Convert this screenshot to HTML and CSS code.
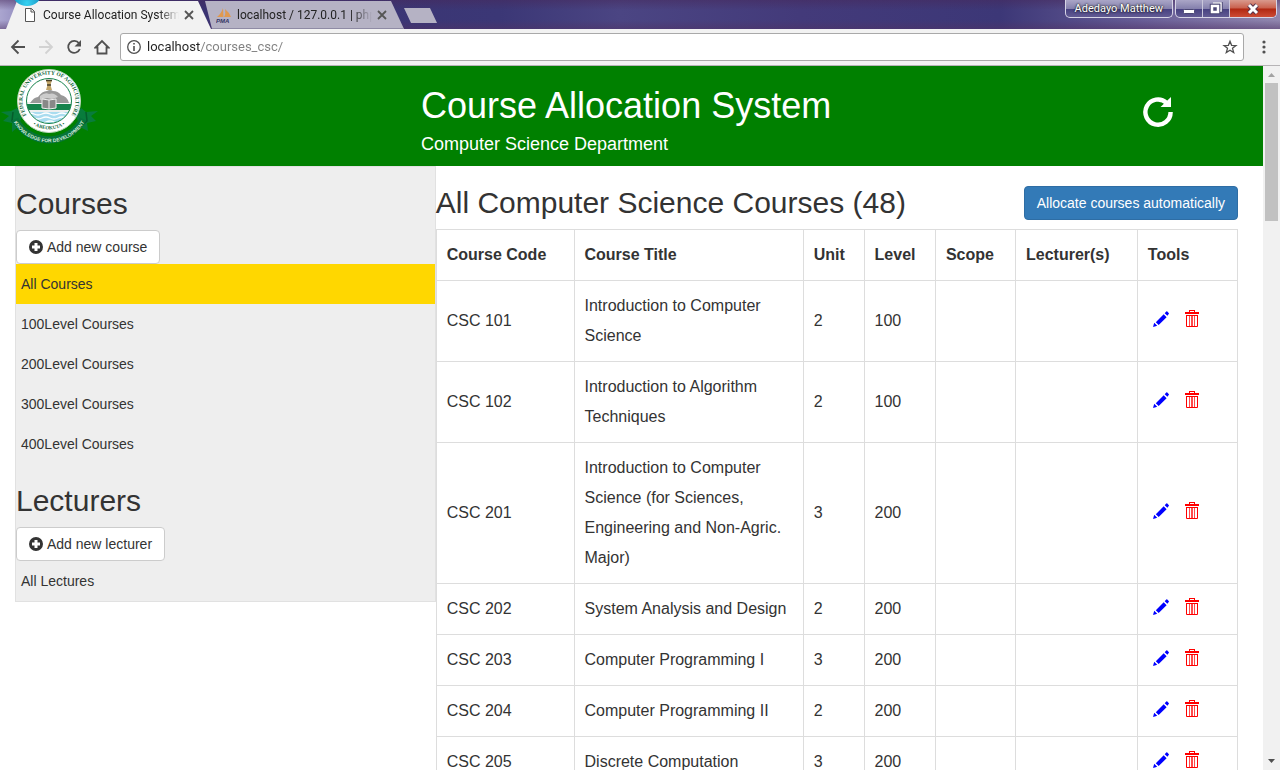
FILE: index.html
```html
<!DOCTYPE html>
<html lang="en">
<head>
<meta charset="utf-8">
<title>Course Allocation System</title>
<link rel="stylesheet" href="styles.css">
</head>
<body>
<svg class="defs" aria-hidden="true">
  <symbol id="pencil" viewBox="0 0 16 16">
    <path d="M0 16l1.200-4.200 3 3zM2.800 11.200l7.900-7.900 2.900 2.900-7.900 7.900zM11.700 2.200L13.300.6q.5-.5 1 0l1.400 1.400q.5.500 0 1l-1.300 1.800z"/>
  </symbol>
  <symbol id="trash" viewBox="0 0 16 18">
    <path d="M5 2V0h6v2h4v2H1V2zm1 0h4V1H6z" fill-rule="evenodd"/>
    <path d="M2 5h12v11a1 1 0 0 1-1 1H3a1 1 0 0 1-1-1zm1 1v10h10V6z" fill-rule="evenodd"/>
    <path d="M5 6h1v10H5zM7 6h2v10H7zM10 6h1v10h-1z" opacity=".7"/>
  </symbol>
  <symbol id="plus" viewBox="0 0 14 14">
    <path d="M7 0a7 7 0 1 0 0 14A7 7 0 0 0 7 0zM5.500 3h3v2.500H11v3H8.500V11h-3V8.500H3v-3h2.500z" fill-rule="evenodd"/>
  </symbol>
  <symbol id="cross" viewBox="0 0 10 10">
    <path d="M1 1l8 8M9 1L1 9" fill="none" stroke="#555" stroke-width="1.800"/>
  </symbol>
</svg>

<div class="tabstrip">
  <span class="orb"></span>
  <div class="tab active">
    <svg class="favicon" viewBox="0 0 16 16"><path d="M3.500 1.500h6l3 3v10h-9zM9 1.500v3.500h3.500" fill="#fff" stroke="#555"/></svg>
    <span class="tab-title">Course Allocation System</span>
    <button class="tab-close" aria-label="Close tab"><svg width="10" height="10"><use href="#cross"/></svg></button>
  </div>
  <div class="tab back">
    <svg class="favicon" viewBox="0 0 16 16"><path d="M1 10Q5 7 7 1l.5 9zM8 10Q10 7 9 2q4 3 6 8z" fill="#e0994f"/><text x="0" y="15.500" class="pma">PMA</text></svg>
    <span class="tab-title">localhost / 127.0.0.1 | php</span>
    <button class="tab-close" aria-label="Close tab"><svg width="10" height="10"><use href="#cross"/></svg></button>
  </div>
  <button class="new-tab" aria-label="New tab"></button>
  <div class="window-controls">
    <button class="profile">Adedayo Matthew</button>
    <div class="control-group">
      <button aria-label="Minimize"><svg width="14" height="14" viewBox="0 0 14 14"><rect x="1.500" y="7.500" width="11" height="4" rx="1" fill="#fff" stroke="#4b4875"/></svg></button>
      <button aria-label="Restore"><svg width="14" height="14" viewBox="0 0 14 14"><path d="M4 1h8v8h-2" fill="none" stroke="#4b4875" stroke-width="3.500"/><path d="M4 1h8v8h-2" fill="none" stroke="#fff" stroke-width="1.500"/><rect x="3" y="4" width="6" height="6" fill="none" stroke="#4b4875" stroke-width="4.500"/><rect x="3" y="4" width="6" height="6" fill="#4b4875" stroke="#fff" stroke-width="2.500"/></svg></button>
      <button class="close-window" aria-label="Close"><svg width="14" height="14" viewBox="0 0 14 14"><path d="M3 3l8 8M11 3l-8 8" stroke="#57344c" stroke-width="5"/><path d="M3 3l8 8M11 3l-8 8" stroke="#fff" stroke-width="3"/></svg></button>
    </div>
  </div>
</div>

<div class="toolbar">
  <button aria-label="Back"><svg viewBox="0 0 16 16"><path d="M15 8H2M8.500 1.500L2 8l6.500 6.500" fill="none" stroke="#505050" stroke-width="1.800"/></svg></button>
  <button aria-label="Forward"><svg viewBox="0 0 16 16"><path d="M1 8h13M7.500 1.500L14 8l-6.500 6.500" fill="none" stroke="#d2d2d2" stroke-width="1.800"/></svg></button>
  <button aria-label="Reload"><svg viewBox="0 0 16 16"><path d="M13 4.200A6 6 0 1 0 13.800 10" fill="none" stroke="#505050" stroke-width="1.800"/><path d="M15 1v6.500H8.500z" fill="#505050"/></svg></button>
  <button aria-label="Home"><svg viewBox="0 0 16 16"><path d="M1.500 8.500L8 2l6.500 6.500H12.500V14.500h-9V8.500z" fill="none" stroke="#505050" stroke-width="1.800"/></svg></button>
  <div class="omnibox">
    <svg viewBox="0 0 16 16"><circle cx="8" cy="8" r="6.300" fill="none" stroke="#505050" stroke-width="1.300"/><path d="M7.200 4h1.600v1.600H7.200zM7.200 7h1.600v5H7.200z" fill="#505050"/></svg>
    <input class="address" type="text" value="localhost/courses_csc/" aria-label="Address">
    <button aria-label="Bookmark"><svg viewBox="0 0 16 16"><path d="M8 2.200l1.600 4.100 4.400.2-3.500 2.800 1.200 4.300L8 11.200l-3.700 2.400 1.200-4.300L2 6.500l4.400-.2z" fill="none" stroke="#505050" stroke-width="1.300"/></svg></button>
  </div>
  <button class="menu" aria-label="Menu"><svg viewBox="0 0 16 16"><circle cx="8" cy="3" r="1.600" fill="#505050"/><circle cx="8" cy="8" r="1.600" fill="#505050"/><circle cx="8" cy="13" r="1.600" fill="#505050"/></svg></button>
</div>

<div class="viewport">
  <div class="page">
    <header class="banner">
      <svg class="crest" viewBox="0 0 100 80" role="img" aria-label="Federal University of Agriculture Abeokuta">
        <defs>
          <path id="ring-top" d="M31 54.400A26.500 26.500 0 1 1 67 54.400"/>
          <path id="ring-bottom" d="M22 45A29 29 0 0 0 76 45"/>
          <path id="ribbon" d="M10 48A41 41 0 0 0 88 48"/>
          <clipPath id="inner"><circle cx="49" cy="35" r="22.500"/></clipPath>
        </defs>
        <path d="M1 46l10-1 6-3 6 5-5 14-6 5 0-9-9-2 6-5zM98 45l-12 1-5-4-6 5 5 14 8 4-1-8 9-2-5-5z" fill="#087c3c"/>
        <path d="M13 46l-1 9 7 6M86 46l1 9-7 6" fill="none" stroke="#055c2b" stroke-width="1.500"/>
        <path d="M15 53A38 38 0 0 0 83 53" fill="none" stroke="#07733b" stroke-width="7"/>
        <circle cx="49" cy="35" r="31.500" fill="#fff" stroke="#bfd9bf"/>
        <g clip-path="url(#inner)">
          <path d="M20 46h60v14H20z" fill="#a9dcef"/>
          <path d="M26 48q4-2 8 0t8 0 8 0 8 0 8 0 8 0M26 52q4-2 8 0t8 0 8 0 8 0 8 0 8 0M30 56q4-2 8 0t8 0 8 0 8 0 8 0" fill="none" stroke="#fff" stroke-width="1.300"/>
          <path d="M24 38h50v6H24z" fill="#16834c"/><path d="M24 36h50v1.500H24zM24 44h50v2H24z" fill="#eee"/>
          <path d="M30 37q4-6 8-6 4-6 9-6 3-2 6 0 5 0 8 4 6 1 8 8z" fill="#999"/>
          <path d="M40 30q5-4 9-2 5-2 9 3l-6 2-5-1-7 2z" fill="#ccc"/>
        </g>
        <circle cx="49" cy="35" r="22.500" fill="none" stroke="#16834c" stroke-width="1"/>
        <path d="M42 33l7 1 7-1v9l-7 1-7-1z" fill="#888" stroke="#eee"/><path d="M49 34v9" stroke="#eee"/>
        <path d="M46 14h6l-1.500 5 1.500 5h-6l1.500-5z" fill="#c2a66a"/><path d="M46 14.500h6M47 19h4" stroke="#463c25" stroke-width="1.500"/>
        <text class="crest-name"><textPath href="#ring-top" startOffset="50%">FEDERAL UNIVERSITY OF AGRICULTURE</textPath></text>
        <text class="crest-place"><textPath href="#ring-bottom" startOffset="50%">• ABEOKUTA •</textPath></text>
        <text class="crest-motto"><textPath href="#ribbon" startOffset="50%">KNOWLEDGE FOR DEVELOPMENT</textPath></text>
      </svg>
      <div class="banner-title">
        <h1>Course Allocation System</h1>
        <h4>Computer Science Department</h4>
      </div>
      <button class="refresh" aria-label="Refresh"><svg viewBox="0 0 30 30"><path d="M23.500 5.800A12.600 12.600 0 1 0 27.600 15" fill="none" stroke="#fff" stroke-width="4.400"/><path d="M28 0v10H17.500z" fill="#fff"/></svg></button>
    </header>

    <div class="content">
      <nav class="sidebar">
        <h2>Courses</h2>
        <button class="btn"><svg><use href="#plus"/></svg>Add new course</button>
        <a class="item selected" href="#">All Courses</a>
        <a class="item" href="#">100Level Courses</a>
        <a class="item" href="#">200Level Courses</a>
        <a class="item" href="#">300Level Courses</a>
        <a class="item" href="#">400Level Courses</a>
        <h2>Lecturers</h2>
        <button class="btn"><svg><use href="#plus"/></svg>Add new lecturer</button>
        <a class="item" href="#">All Lectures</a>
      </nav>
      <main class="main">
        <div class="main-head">
          <h2>All Computer Science Courses (48)</h2>
          <button class="btn primary">Allocate courses automatically</button>
        </div>
        <table class="courses">
          <colgroup><col class="c-code"><col class="c-title"><col class="c-unit"><col class="c-level"><col class="c-scope"><col class="c-lecturer"><col class="c-tools"></colgroup>
          <thead><tr><th>Course Code</th><th>Course Title</th><th>Unit</th><th>Level</th><th>Scope</th><th>Lecturer(s)</th><th>Tools</th></tr></thead>
          <tbody>
            <tr><td>CSC 101</td><td>Introduction to Computer Science</td><td>2</td><td>100</td><td></td><td></td><td><div class="tools"><a class="edit" href="#" aria-label="Edit"><svg><use href="#pencil"/></svg></a><a class="delete" href="#" aria-label="Delete"><svg><use href="#trash"/></svg></a></div></td></tr>
            <tr><td>CSC 102</td><td>Introduction to Algorithm Techniques</td><td>2</td><td>100</td><td></td><td></td><td><div class="tools"><a class="edit" href="#" aria-label="Edit"><svg><use href="#pencil"/></svg></a><a class="delete" href="#" aria-label="Delete"><svg><use href="#trash"/></svg></a></div></td></tr>
            <tr><td>CSC 201</td><td>Introduction to Computer Science (for Sciences, Engineering and Non-Agric. Major)</td><td>3</td><td>200</td><td></td><td></td><td><div class="tools"><a class="edit" href="#" aria-label="Edit"><svg><use href="#pencil"/></svg></a><a class="delete" href="#" aria-label="Delete"><svg><use href="#trash"/></svg></a></div></td></tr>
            <tr><td>CSC 202</td><td>System Analysis and Design</td><td>2</td><td>200</td><td></td><td></td><td><div class="tools"><a class="edit" href="#" aria-label="Edit"><svg><use href="#pencil"/></svg></a><a class="delete" href="#" aria-label="Delete"><svg><use href="#trash"/></svg></a></div></td></tr>
            <tr><td>CSC 203</td><td>Computer Programming I</td><td>3</td><td>200</td><td></td><td></td><td><div class="tools"><a class="edit" href="#" aria-label="Edit"><svg><use href="#pencil"/></svg></a><a class="delete" href="#" aria-label="Delete"><svg><use href="#trash"/></svg></a></div></td></tr>
            <tr><td>CSC 204</td><td>Computer Programming II</td><td>2</td><td>200</td><td></td><td></td><td><div class="tools"><a class="edit" href="#" aria-label="Edit"><svg><use href="#pencil"/></svg></a><a class="delete" href="#" aria-label="Delete"><svg><use href="#trash"/></svg></a></div></td></tr>
            <tr><td>CSC 205</td><td>Discrete Computation</td><td>3</td><td>200</td><td></td><td></td><td><div class="tools"><a class="edit" href="#" aria-label="Edit"><svg><use href="#pencil"/></svg></a><a class="delete" href="#" aria-label="Delete"><svg><use href="#trash"/></svg></a></div></td></tr>
          </tbody>
        </table>
      </main>
    </div>
  </div>
  <div class="scrollbar">
    <svg class="arrow" viewBox="0 0 17 17"><path d="M5 11h7L8.500 7z" fill="#a3a3a3"/></svg>
    <div class="track"><div class="thumb"></div></div>
    <svg class="arrow" viewBox="0 0 17 17"><path d="M5 6h7l-3.500 4z" fill="#505050"/></svg>
  </div>
</div>
</body>
</html>
```

FILE: styles.css
```css
* { box-sizing: border-box; }
body {
  margin: 0;
  height: 100vh;
  overflow: hidden;
  display: flex;
  flex-direction: column;
  font: 14px/20px "Liberation Sans", Arial, sans-serif;
  color: #333;
  background: #fff;
}
button { font: inherit; color: inherit; border: 0; padding: 0; background: none; }
a { color: inherit; text-decoration: none; }
h1, h2, h4 { margin: 0; font-weight: 400; }
.defs { position: absolute; width: 0; height: 0; }

/* Window frame */
.tabstrip {
  position: relative;
  flex: none;
  height: 29px;
  display: flex;
  align-items: flex-end;
  padding: 0 3px 0 6px;
  overflow: hidden;
  font: 12px/16px Roboto, sans-serif;
  color: #222;
  background:
    linear-gradient(to bottom, rgba(70, 40, 90, .5), transparent 35%, transparent 70%, rgba(80, 50, 100, .5)),
    linear-gradient(to right, #aaa5cf 0, #9a94c4 14px, #39306f 30px, #3b3776 500px, #4b4583 620px, #433a7a 800px, #3c3777 1000px, #6a5f98 1150px, #9086ae 100%);
}
.orb {
  position: absolute;
  z-index: 2;
  left: 12px;
  top: -22px;
  width: 30px;
  height: 28px;
  border-radius: 50%;
  background: radial-gradient(circle at 50% 90%, #35d2f2, #1488b8 60%, #0c4d80);
}
.tab { display: flex; align-items: center; height: 28px; gap: 5px; }
.tab.active { width: 205px; padding: 0 17px 0 16px; background: #f2f2f2; clip-path: polygon(0 100%, 11px 0, 192px 0, 100% 100%); }
.tab.back { width: 199px; margin-left: -6px; padding: 0 17px 0 11px; background: #b5b2c4; clip-path: polygon(0 0, 186px 0, 100% 100%, 7px 100%); border-bottom: 1px solid #8f8ba5; }
.favicon { width: 16px; height: 16px; flex: none; }
.pma { font: italic bold 6px "Liberation Sans", sans-serif; fill: #353565; }
.tab-title {
  flex: 1;
  overflow: hidden;
  white-space: nowrap;
  mask-image: linear-gradient(to right, #000 calc(100% - 20px), transparent);
}
.tab-close { display: flex; }
.new-tab { width: 33px; height: 15px; margin: 0 0 6px 0; background: #b5b2c4; clip-path: polygon(0 0, 26px 0, 100% 100%, 7px 100%); }
.window-controls { align-self: flex-start; display: flex; gap: 2px; margin-left: auto; }
.profile, .control-group {
  height: 18px;
  border: 1px solid #d7d5e6;
  border-top: 0;
  border-radius: 0 0 5px 5px;
  background: linear-gradient(#aaa6c7, #8581ad 50%, #464080 52%, #625b94);
}
.profile { padding: 0 9px; font-size: 11px; color: #fff; text-shadow: 0 0 2px #222, 0 0 2px #222; }
.control-group { display: flex; overflow: hidden; }
.control-group button { width: 27px; display: flex; align-items: center; justify-content: center; border-right: 1px solid #c9c7db; }
.control-group .close-window { width: 46px; border: 0; background: linear-gradient(#d99a8d, #c9604c 48%, #b02711 52%, #cd4c36); }

/* Browser toolbar */
.toolbar {
  flex: none;
  height: 37px;
  display: flex;
  align-items: center;
  gap: 12px;
  padding: 0 10px;
  background: #f2f2f2;
  border-bottom: 1px solid #b6b4b6;
}
.toolbar svg { display: block; width: 16px; height: 16px; }
.omnibox {
  flex: 1;
  display: flex;
  align-items: center;
  gap: 5px;
  height: 28px;
  margin-left: -2px;
  padding: 0 5px;
  border: 1px solid #a9a9a9;
  border-radius: 3px;
  background: #fff;
}
.address {
  flex: 1;
  min-width: 0;
  border: 0;
  padding: 0;
  outline: 0;
  font: 13px/20px Roboto, sans-serif;
  color: transparent;
  background: linear-gradient(to right, #222 53px, #808080 53px);
  -webkit-background-clip: text;
  background-clip: text;
}
.menu { margin-right: -2px; }

/* Page */
.viewport { flex: 1; min-height: 0; display: flex; }
.page { flex: 1; min-width: 0; overflow: hidden; }
.banner { display: grid; grid-template-columns: repeat(3, 1fr); height: 100px; background: #008000; color: #fff; }
.crest { width: 100px; height: 80px; }
.crest-name, .crest-place { font: bold 5.5px "Liberation Serif", serif; fill: #14673c; text-anchor: middle; }
.crest-place { font-size: 5px; }
.crest-motto { font: bold 5px "Liberation Sans", sans-serif; fill: #d5ead9; text-anchor: middle; }
.banner-title { padding-top: 20px; white-space: nowrap; }
.banner-title h1 { font-size: 36px; line-height: 40px; }
.banner-title h4 { margin-top: 8px; font-size: 18px; line-height: 20px; }
.refresh { justify-self: end; align-self: start; margin: 31px 90px 0 0; }
.refresh svg { display: block; width: 30px; height: 30px; }
.content { display: flex; align-items: flex-start; padding: 0 25px 0 15px; }
.sidebar { flex: 0 0 34.4%; border: 1px solid #e1e1e1; background: #eee; }
.sidebar h2 { margin: 20px 0 10px; }
h2 { font-size: 30px; line-height: 33px; }
.btn {
  display: flex;
  align-items: center;
  gap: 4px;
  padding: 6px 12px;
  border: 1px solid #ccc;
  border-radius: 4px;
  background: #fff;
  white-space: nowrap;
}
.btn svg { width: 14px; height: 14px; fill: #333; }
.btn.primary { color: #fff; background: #337ab7; border-color: #2e6da4; }
.item { display: block; padding: 10px 5px; }
.item.selected { background: #ffd700; }
.main { flex: 1; min-width: 0; padding-top: 20px; }
.main-head { display: flex; justify-content: space-between; height: 43px; align-items: flex-start; }
.courses { width: 100%; table-layout: fixed; border-collapse: collapse; font-size: 16px; line-height: 30px; }
.courses th, .courses td { padding: 10px; border: 1px solid #ddd; text-align: left; vertical-align: middle; }
.c-code { width: 17.2%; }
.c-title { width: 28.6%; }
.c-unit { width: 7.6%; }
.c-level { width: 8.9%; }
.c-scope { width: 10%; }
.c-lecturer { width: 15.2%; }
.c-tools { width: 12.5%; }
.tools { display: flex; align-items: center; gap: 15px; padding: 0 0 4px 5px; }
.tools a { display: flex; }
.tools svg { width: 16px; height: 18px; }
.edit { fill: #00f; }
.delete { fill: #f00; }

.scrollbar { flex: none; width: 17px; display: flex; flex-direction: column; background: #f1f1f1; }
.arrow { width: 17px; height: 17px; }
.track { flex: 1; padding: 0 2px; }
.thumb { height: 20.6%; background: #c1c1c1; }
```
